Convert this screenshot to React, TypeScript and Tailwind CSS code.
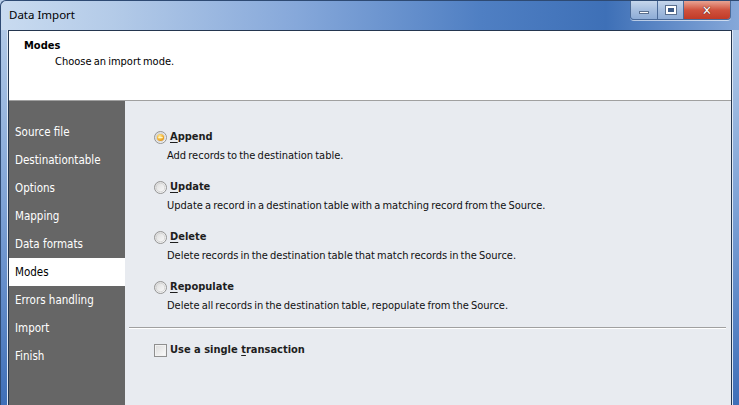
import React from "react";

const ui = { fontFamily: '"DejaVu Sans Condensed", "Liberation Sans", sans-serif' };

function Radio({ checked }: { checked?: boolean }) {
  return (
    <svg width="13" height="13" viewBox="0 0 13 13" className="shrink-0">
      <defs>
        <linearGradient id="rg" x1="0" y1="0" x2="1" y2="1">
          <stop offset="0" stopColor="#d8d8d8" />
          <stop offset="1" stopColor="#ffffff" />
        </linearGradient>
        <radialGradient id="og" cx="0.4" cy="0.35" r="0.7">
          <stop offset="0" stopColor="#fff2a8" />
          <stop offset="0.6" stopColor="#f3b53a" />
          <stop offset="1" stopColor="#d98b10" />
        </radialGradient>
      </defs>
      <circle cx="6.5" cy="6.5" r="6" fill="url(#rg)" stroke="#939393" strokeWidth="1" />
      <circle cx="6.5" cy="6.5" r="4.3" fill="none" stroke="#cfcfcf" strokeWidth="0.8" />
      {checked && (
        <>
          <circle cx="6.5" cy="6.5" r="3.6" fill="url(#og)" />
          <rect x="4.3" y="6" width="4.4" height="1.1" fill="#fff6c8" />
        </>
      )}
    </svg>
  );
}

function Option({
  mn,
  rest,
  desc,
  checked,
}: {
  mn: string;
  rest: string;
  desc: string;
  checked?: boolean;
}) {
  return (
    <div className="flex flex-col">
      <div className="flex items-center h-[14px]">
        <Radio checked={checked} />
        <span className="ml-[3px] font-bold text-[#1e1e1e] text-[11px] leading-[14px]">
          <span className="underline underline-offset-2">{mn}</span>
          {rest}
        </span>
      </div>
      <div className="ml-[13px] mt-[5px] text-[11px] leading-[14px] text-[#101010] [word-spacing:-1px]">{desc}</div>
    </div>
  );
}

const navItems = [
  "Source file",
  "Destinationtable",
  "Options",
  "Mapping",
  "Data formats",
  "Modes",
  "Errors handling",
  "Import",
  "Finish",
];

export default function App() {
  return (
    <div
      className="w-[739px] h-[405px] overflow-hidden flex flex-col bg-gradient-to-b from-[#b9cfea] via-[#7fa3d6] to-[#3f6fb8]"
      style={ui}
    >
      {/* Title bar */}
      <div className="h-[30px] shrink-0 flex items-start bg-[linear-gradient(to_right,#c9dbf0_0%,#b4cbe8_15%,#86a8da_40%,#4f7fc3_65%,#3e70b7_82%,#86a8d9_100%)] border-t border-l border-[#2e4a73] rounded-tl-[6px]">
        <div
          className="pl-[8px] pt-[6px] text-[11.5px] leading-[16px] text-black"
          style={{ fontFamily: '"Noto Sans", "Open Sans", sans-serif' }}
        >
          Data Import
        </div>
        <div className="ml-auto mr-[8px] flex h-[19px] rounded-b-[4px] overflow-hidden border border-t-0 border-[#4b6a98] shadow-[0_1px_0_rgba(255,255,255,0.6)]">
          <div className="w-[27px] h-full flex items-center justify-center bg-gradient-to-b from-[#c6d6ec] via-[#a6bedf] to-[#8eacd6] border-r border-[#4b6a98]">
            <div className="w-[10px] h-[3px] mt-[5px] bg-white border border-[#5a6f8e]" />
          </div>
          <div className="w-[26px] h-full flex items-center justify-center bg-gradient-to-b from-[#c6d6ec] via-[#a6bedf] to-[#8eacd6] border-r border-[#4b6a98]">
            <div className="w-[10px] h-[8px] border-[2px] border-white outline outline-1 outline-[#5a6f8e] bg-[#3d5a86] box-border" />
          </div>
          <div className="w-[46px] h-full flex items-center justify-center bg-gradient-to-b from-[#e8a393] via-[#d0523e] to-[#c13a27]">
            <span className="text-white font-bold text-[13px] leading-none" style={{ textShadow: "0 0 1px #5a1a10, 0 0 1px #5a1a10" }}>
              ✕
            </span>
          </div>
        </div>
      </div>

      {/* Body with frame */}
      <div className="flex-1 flex pl-[7px] pr-[7px] border-l border-[#2e4a73]">
        <div className="flex-1 flex flex-col border border-b-0 border-[#24364f] bg-[#e8ebf0] shadow-[-1px_0_0_#dfe9f6,1px_0_0_#dfe9f6]">
          {/* Header */}
          <div className="h-[70px] shrink-0 bg-white border-b border-[#a0a0a0]">
            <div className="pl-[15px] pt-[8px] font-bold text-[11px] leading-[14px] text-black">Modes</div>
            <div className="pl-[46px] pt-[2px] text-[11px] leading-[14px] text-black [word-spacing:-1px]">Choose an import mode.</div>
          </div>

          <div className="flex-1 flex">
            {/* Sidebar */}
            <div className="w-[116px] shrink-0 bg-[#666666] pt-[17px]">
              {navItems.map((n) => (
                <div
                  key={n}
                  className={
                    "h-[28px] flex items-center pl-[6px] pt-[1px] text-[11.5px] " +
                    (n === "Modes" ? "bg-white text-black" : "text-white")
                  }
                >
                  {n}
                </div>
              ))}
            </div>

            {/* Content */}
            <div className="flex-1 flex flex-col pl-[4px] pr-[5px]">
              <div className="pl-[25px] pt-[29px] flex flex-col gap-[17px]">
                <Option mn="A" rest="ppend" desc="Add records to the destination table." checked />
                <Option
                  mn="U"
                  rest="pdate"
                  desc="Update a record in a destination table with a matching record from the Source."
                />
                <Option
                  mn="D"
                  rest="elete"
                  desc="Delete records in the destination table that match records in the Source."
                />
                <Option
                  mn="R"
                  rest="epopulate"
                  desc="Delete all records in the destination table, repopulate from the Source."
                />
              </div>
              <div className="mt-[14px] h-[2px] border-t border-[#a0a0a0] border-b border-b-white" />
              <div className="pl-[25px] pt-[14px] flex items-center h-[28px]">
                <div className="w-[13px] h-[13px] border border-[#8f8f8f] bg-gradient-to-br from-[#dcdcdc] to-[#fbfbfb] shadow-[inset_0_0_0_1px_#f2f2f2]" />
                <span className="ml-[3px] font-bold text-[11px] leading-[14px] text-[#1e1e1e]">
                  Use a single <span className="underline underline-offset-2">t</span>ransaction
                </span>
              </div>
            </div>
          </div>
        </div>
      </div>
    </div>
  );
}
